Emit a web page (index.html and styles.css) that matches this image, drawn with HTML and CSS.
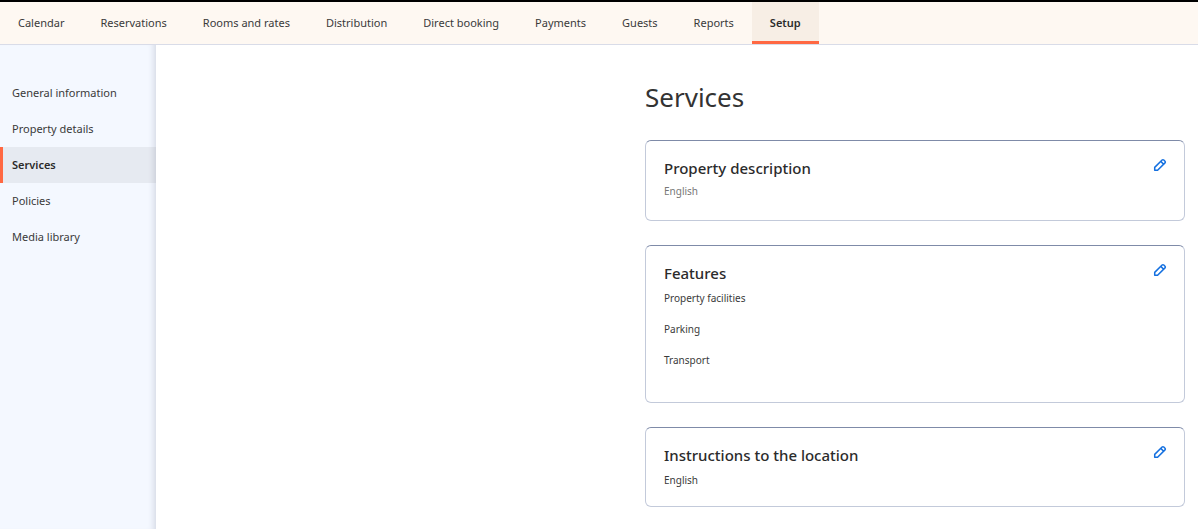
FILE: index.html
```html
<!DOCTYPE html>
<html lang="en">
<head>
<meta charset="utf-8">
<title>Services</title>
<link rel="stylesheet" href="styles.css">
</head>
<body>
<svg class="sprite" aria-hidden="true">
  <symbol id="pencil" viewBox="0 0 14 14">
    <path d="M1.7 12.3V9.4L9.1 2a1.2 1.2 0 0 1 1.7 0L12 3.2a1.2 1.2 0 0 1 0 1.7L4.6 12.3ZM7.8 3.4l2.8 2.8" fill="none" stroke="currentColor" stroke-width="1.5" stroke-linejoin="round"/>
  </symbol>
</svg>
<nav class="topnav" aria-label="Main">
  <a class="tab" href="#">Calendar</a>
  <a class="tab" href="#">Reservations</a>
  <a class="tab" href="#">Rooms and rates</a>
  <a class="tab" href="#">Distribution</a>
  <a class="tab" href="#">Direct booking</a>
  <a class="tab" href="#">Payments</a>
  <a class="tab" href="#">Guests</a>
  <a class="tab" href="#">Reports</a>
  <a class="tab tab-active" href="#" aria-current="page">Setup</a>
</nav>
<div class="layout">
  <nav class="sidebar" aria-label="Setup">
    <a class="side-link" href="#">General information</a>
    <a class="side-link" href="#">Property details</a>
    <a class="side-link side-active" href="#" aria-current="page">Services</a>
    <a class="side-link" href="#">Policies</a>
    <a class="side-link" href="#">Media library</a>
  </nav>
  <main class="main">
    <div class="content">
      <h1 class="title">Services</h1>
      <section class="card">
        <div class="card-body">
          <h2 class="card-title">Property description</h2>
          <p class="language">English</p>
        </div>
        <button class="edit" type="button" aria-label="Edit property description"><svg class="icon"><use href="#pencil"/></svg></button>
      </section>
      <section class="card card-features">
        <div class="card-body">
          <h2 class="card-title">Features</h2>
          <ul class="features">
            <li>Property facilities</li>
            <li>Parking</li>
            <li>Transport</li>
          </ul>
        </div>
        <button class="edit" type="button" aria-label="Edit features"><svg class="icon"><use href="#pencil"/></svg></button>
      </section>
      <section class="card card-location">
        <div class="card-body">
          <h2 class="card-title">Instructions to the location</h2>
          <p class="detail">English</p>
        </div>
        <button class="edit" type="button" aria-label="Edit instructions to the location"><svg class="icon"><use href="#pencil"/></svg></button>
      </section>
    </div>
  </main>
</div>
</body>
</html>
```
FILE: styles.css
```css
* {
  box-sizing: border-box;
}

body {
  margin: 0;
  min-height: 100vh;
  display: flex;
  flex-direction: column;
  background: #fff;
  color: #3a3a3a;
  font: 11px/16px "Noto Sans", sans-serif;
}

h1, h2, p, ul {
  margin: 0;
  padding: 0;
}

a {
  color: inherit;
  text-decoration: none;
}

.sprite {
  display: none;
}

.topnav {
  display: flex;
  background: #fef8f2;
  border-top: 2px solid #000;
  border-bottom: 1px solid #d9dce8;
}

.tab {
  padding: 13px 18px 10px;
  border-bottom: 3px solid transparent;
  white-space: nowrap;
}

.tab-active {
  background: #f7eee5;
  border-bottom-color: #ff6842;
  color: #2b2b2b;
  font-weight: 600;
}

.layout {
  display: flex;
  flex: 1;
}

.sidebar {
  flex: none;
  width: 156px;
  padding-top: 30px;
  background: #f4f8ff;
  box-shadow: inset -7px 0 6px -5px #d3d8e3;
}

.side-link {
  display: block;
  padding: 10px 9px;
  border-left: 3px solid transparent;
}

.side-active {
  background: rgba(51, 51, 51, 0.07);
  border-left-color: #ff6842;
  color: #2b2b2b;
  font-weight: 600;
}

.main {
  flex: 1;
  padding: 33px 13px 22px;
}

.content {
  display: flex;
  flex-direction: column;
  gap: 24px;
  max-width: 540px;
  margin-left: auto;
}

.title {
  color: #333;
  font-size: 26px;
  font-weight: 400;
  line-height: 38px;
}

.card {
  display: flex;
  align-items: flex-start;
  justify-content: space-between;
  padding: 16px 17px 21px 18px;
  border: 1px solid #c3cada;
  border-top-color: #7f8ba8;
  border-radius: 6px;
}

.card-title {
  color: #2b2b2b;
  font-size: 15px;
  font-weight: 500;
  line-height: 22px;
}

.language,
.detail,
.features {
  font-size: 10px;
  line-height: 16px;
}

.language {
  margin-top: 4px;
  color: #777;
}

.detail {
  margin-top: 6px;
}

.features {
  display: flex;
  flex-direction: column;
  gap: 15px;
  margin-top: 6px;
  list-style: none;
}

.card-features {
  padding-bottom: 34px;
}

.card-location {
  padding-bottom: 18px;
}

.edit {
  margin-top: 1px;
  padding: 0;
  border: 0;
  background: none;
  color: #1470e0;
  cursor: pointer;
}

.icon {
  display: block;
  width: 14px;
  height: 14px;
}
```
